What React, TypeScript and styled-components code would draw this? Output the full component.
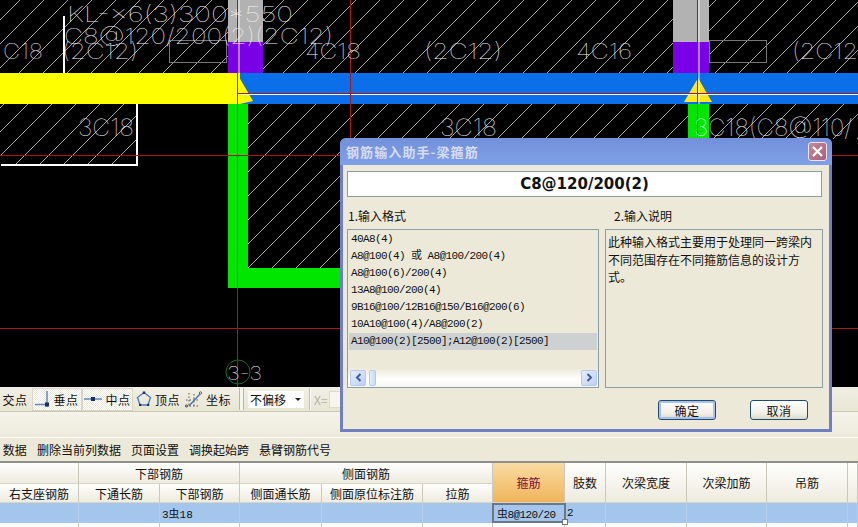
import React from 'react';
import styled, { createGlobalStyle } from 'styled-components';

const CJK = '"Noto Sans CJK SC", "Liberation Sans", sans-serif';

const GlobalStyle = createGlobalStyle`
  html, body {
    margin: 0;
    padding: 0;
    background: #ece9d8;
    overflow: hidden;
  }
  * { box-sizing: border-box; }
`;

const Page = styled.div`
  position: relative;
  width: 858px;
  height: 527px;
  overflow: hidden;
  display: flex;
  flex-direction: column;
  font-family: ${CJK};
  font-size: 12px;
  color: #111;
  background: #ece9d8;
`;

const CadCanvas = styled.svg`
  display: block;
  flex: none;
  width: 858px;
  height: 387px;
  background: #000;
`;

const CadLabel = styled.text`
  font-family: Inter, "Liberation Sans", sans-serif;
  font-weight: 100;
  fill: #f2f2f2;
`;

const StatusBar = styled.div`
  flex: none;
  height: 25px;
  display: flex;
  align-items: center;
  padding-left: 3px;
  background: linear-gradient(#f1efe4, #e9e6d5);
  border-bottom: 1px solid #c9c6b4;
  white-space: nowrap;
`;

const SnapItem = styled.div<{ $width: number; $on?: boolean }>`
  width: ${(p) => p.$width}px;
  height: 23px;
  display: flex;
  align-items: center;
  justify-content: center;
  gap: 3px;
  letter-spacing: 0.5px;
  ${(p) =>
    p.$on &&
    `
    border: 1px solid #d9d6c6;
    background: repeating-conic-gradient(#fff 0 25%, #eceadd 0 50%) 0 0 / 2px 2px;
  `}
`;

const Grip = styled.div`
  width: 5px;
  height: 22px;
  margin: 0 4px 0 6px;
  border-left: 1px solid #b8b5a3;
  border-right: 1px solid #b8b5a3;
  background: #f7f6ee;
`;

const ThinDivider = styled.div`
  width: 2px;
  height: 22px;
  margin: 0 1px 0 5px;
  border-left: 1px solid #c2bfae;
  border-right: 1px solid #fbfaf4;
`;

const OffsetSelect = styled.div`
  width: 56px;
  height: 17px;
  padding: 0 3px 0 2px;
  display: flex;
  align-items: center;
  justify-content: space-between;
  background: #fff;
  line-height: 17px;
`;

const SelectArrow = styled.div`
  width: 0;
  height: 0;
  border-left: 3px solid transparent;
  border-right: 3px solid transparent;
  border-top: 3px solid #222;
`;

const CoordLabel = styled.span`
  margin-left: 2px;
  color: #b5b2a4;
  width: 15px;
`;

const CoordInput = styled.div`
  width: 20px;
  height: 17px;
  background: #f6f5ee;
  border: 1px solid #dedbc9;
`;

const BlankBand = styled.div`
  flex: none;
  height: 26px;
  background: linear-gradient(#f5f3ea, #eeebdd);
  border-bottom: 1px solid #fbfaf4;
`;

const ActionBar = styled.div`
  flex: none;
  height: 25px;
  display: flex;
  align-items: center;
  background: #ece9d8;
  border-bottom: 2px solid #8f8f8b;
  white-space: nowrap;
`;

const Action = styled.span<{ $width: number }>`
  width: ${(p) => p.$width}px;
  flex: none;
`;

const columns = '79px 81px 80px 82px 101px 70px 72px 41px 81px 80px 81px 10px';

const SheetHead = styled.div`
  flex: none;
  display: grid;
  grid-template-columns: ${columns};
  grid-template-rows: 21px 19px;
  height: 40px;
`;

const HeadCell = styled.div<{ $col: string; $row: string; $active?: boolean }>`
  grid-column: ${(p) => p.$col};
  grid-row: ${(p) => p.$row};
  display: flex;
  align-items: center;
  justify-content: center;
  border-right: 1px solid #cbc8ba;
  border-bottom: 1px solid #d8d5c6;
  color: ${(p) => (p.$active ? '#7a0c3c' : '#111')};
  background: ${(p) =>
    p.$active
      ? 'linear-gradient(#f9dba2, #f0b55a)'
      : 'linear-gradient(#fefefc, #eeebdf)'};
`;

const SheetRow = styled.div<{ $selected?: boolean }>`
  flex: none;
  display: grid;
  grid-template-columns: ${columns};
  height: 20px;
  background: ${(p) => (p.$selected ? '#a4c6ec' : '#fff')};
`;

const DataCell = styled.div<{ $selected?: boolean }>`
  display: flex;
  align-items: center;
  padding-left: 2px;
  white-space: nowrap;
  font-family: "Liberation Mono", ${CJK};
  font-size: 11px;
  border-right: 1px solid ${(p) => (p.$selected ? '#b4cdea' : '#c9c7bb')};
`;

const FocusCell = styled.div`
  position: relative;
  display: flex;
  align-items: center;
  padding-left: 3px;
  margin: 0 -1px;
  border: 2px solid #6c7784;
  white-space: nowrap;
  font-family: "Liberation Mono", ${CJK};
  font-size: 11px;
  letter-spacing: -0.6px;
`;

const FocusHandle = styled.div`
  position: absolute;
  right: -4px;
  bottom: -4px;
  width: 6px;
  height: 6px;
  background: #fff;
  border: 1px solid #6c7784;
`;

const Dialog = styled.div`
  position: absolute;
  left: 340px;
  top: 138px;
  width: 492px;
  height: 294px;
  display: flex;
  flex-direction: column;
  border-radius: 6px 6px 0 0;
  background: #6f7fc0;
  padding: 0 3px 3px;
`;

const TitleBar = styled.div`
  flex: none;
  height: 27px;
  margin: 0 -3px;
  padding: 0 5px 0 6px;
  display: flex;
  align-items: center;
  justify-content: space-between;
  border-radius: 6px 6px 0 0;
  background: linear-gradient(#7390da, #7a9ae2 60%, #7f9fe6);
`;

const TitleText = styled.span`
  color: #d6dcf0;
  font-size: 13px;
  font-weight: 700;
  letter-spacing: 1.1px;
`;

const CloseButton = styled.div`
  width: 19px;
  height: 19px;
  display: flex;
  align-items: center;
  justify-content: center;
  border: 1px solid #e8e4ea;
  border-radius: 3px;
  background: linear-gradient(135deg, #c48a9c, #a85f78);
`;

const DialogBody = styled.div`
  flex: 1;
  padding: 6px 7px 0 4px;
  background: #ece9d8;
  display: flex;
  flex-direction: column;
`;

const FormulaBox = styled.div`
  height: 26px;
  flex: none;
  display: flex;
  align-items: center;
  justify-content: center;
  background: #fff;
  border: 1px solid #8a9ea6;
  font-family: "DejaVu Sans", sans-serif;
  font-size: 15px;
  font-weight: 700;
  color: #111;
`;

const Panels = styled.div`
  display: grid;
  grid-template-columns: 252px 218px;
  column-gap: 6px;
  grid-template-rows: 32px 159px;
`;

const PanelLabel = styled.div<{ $inset: number }>`
  padding: 11px 0 0 ${(p) => p.$inset}px;
  line-height: 16px;
  font-size: 12px;
`;

const ListPanel = styled.div`
  display: flex;
  flex-direction: column;
  justify-content: space-between;
  border: 1px solid #8a9ea6;
  padding: 1px 1px 0;
`;

const FormatRows = styled.div`
  display: flex;
  flex-direction: column;
`;

const FormatRow = styled.div<{ $selected?: boolean }>`
  height: 17px;
  line-height: 17px;
  padding-left: 2px;
  font-family: "Liberation Mono", ${CJK};
  font-size: 11px;
  letter-spacing: -0.6px;
  white-space: nowrap;
  color: #111;
  background: ${(p) => (p.$selected ? '#cdd1d2' : 'transparent')};
`;

const ScrollTrack = styled.div`
  height: 19px;
  margin: 0 -1px;
  display: flex;
  align-items: center;
  justify-content: space-between;
  padding: 0 1px 0 2px;
  background: linear-gradient(#ece9d8, #fff 60%, #f6f5ee);
`;

const ScrollArrow = styled.div`
  width: 16px;
  height: 16px;
  display: flex;
  align-items: center;
  justify-content: center;
  border: 1px solid #b6c8ec;
  border-radius: 2px;
  background: linear-gradient(135deg, #e6eefc, #bccff4);
`;

const ScrollThumb = styled.div`
  width: 7px;
  height: 16px;
  margin: 0 auto 0 3px;
  border: 1px solid #b6c8ec;
  border-radius: 2px;
  background: linear-gradient(90deg, #e6eefc, #c8d8f6);
`;

const NotePanel = styled.div`
  border: 1px solid #8a9ea6;
  padding: 3px 2px;
  line-height: 17.5px;
  font-size: 12px;
  color: #111;
`;

const DialogFooter = styled.div`
  display: flex;
  justify-content: flex-end;
  gap: 34px;
  padding: 12px 14px 0 0;
`;

const DialogButton = styled.div<{ $primary?: boolean }>`
  width: 58px;
  height: 20px;
  display: flex;
  align-items: center;
  justify-content: center;
  border: 1px solid #1f4a73;
  border-radius: 3px;
  background: linear-gradient(#fff, #f1efe4 70%, #dcd8c6);
  box-shadow: ${(p) =>
    p.$primary ? 'inset 0 0 0 2px #a9c2ea' : 'none'};
  letter-spacing: 0.5px;
`;

const hatchAreas = [
  [0, 0, 858, 73, 'hatchTop'],
  [0, 104, 137, 61, 'hatchLow'],
  [248, 104, 440, 164, 'hatchLow'],
  [709, 104, 149, 35, 'hatchLow'],
] as const;

const solids = [
  [228, 0, 35, 42, '#b2b2b2'],
  [228, 42, 35, 31, '#7a00e6'],
  [673, 0, 36, 42, '#b2b2b2'],
  [673, 42, 36, 31, '#7a00e6'],
  [228, 104, 20, 184, '#00e600'],
  [228, 268, 130, 20, '#00e600'],
  [688, 104, 21, 40, '#00e600'],
  [240, 73, 618, 31, '#0a6fe8'],
  [0, 73, 240, 31, '#ffff00'],
] as const;

const redLines = [
  [0, 155.5, 858, 155.5],
  [0, 328.5, 858, 328.5],
  [237.5, 0, 237.5, 387],
  [697.5, 0, 697.5, 140],
  [350.5, 0, 350.5, 140],
  [238, 93.5, 858, 93.5],
];

const whiteLines = [
  [239, 0, 239, 73],
  [699, 0, 699, 104],
  [240, 94.5, 858, 94.5],
];

const cadTexts = [
  { x: 67, y: 22, w: 226, size: 22, t: 'KL-×6(3)300*550' },
  { x: 64, y: 44, w: 269, size: 22, t: 'C8@120/200(2)(2C12)' },
  { x: 3, y: 59, w: 40, size: 22, t: 'C18' },
  { x: 62, y: 59, w: 76, size: 22, t: '(2C12)' },
  { x: 305, y: 59, w: 56, size: 22, t: '4C18' },
  { x: 424, y: 59, w: 78, size: 22, t: '(2C12)' },
  { x: 576, y: 59, w: 56, size: 22, t: '4C16' },
  { x: 792, y: 59, w: 66, size: 22, t: '(2C12' },
  { x: 78, y: 136, w: 56, size: 24, t: '3C18' },
  { x: 440, y: 136, w: 57, size: 24, t: '3C18' },
  { x: 694, y: 136, w: 158, size: 24, t: '3C18(C8@110/' },
  { x: 227, y: 380, w: 35, size: 19, t: '3-3' },
];

const CadDrawing = () => (
  <CadCanvas viewBox="0 0 858 387">
    <defs>
      <pattern id="hatchTop" width="24" height="24" patternUnits="userSpaceOnUse" patternTransform="translate(20 0)">
        <path d="M-1 25 L25 -1" stroke="#b4b4b4" strokeWidth="0.9" fill="none" />
      </pattern>
      <pattern id="hatchLow" width="24" height="24" patternUnits="userSpaceOnUse" patternTransform="translate(12 0)">
        <path d="M-1 25 L25 -1" stroke="#b4b4b4" strokeWidth="0.9" fill="none" />
      </pattern>
    </defs>
    {hatchAreas.map(([x, y, w, h, id], i) => (
      <rect key={i} x={x} y={y} width={w} height={h} fill={`url(#${id})`} />
    ))}
    {solids.map(([x, y, w, h, c], i) => (
      <rect key={i} x={x} y={y} width={w} height={h} fill={c} />
    ))}
    <path d="M239 77 L253 101 L240 104 L239 104 Z" fill="#ffff00" />
    <path d="M698 78 L712 102 L684 102 Z" fill="#ffe81a" />
    <path d="M1 165 H137 V104" stroke="#fff" strokeWidth="2" fill="none" />
    <path d="M64 16 V73" stroke="#fff" strokeWidth="2" fill="none" />
    <rect x="169.5" y="40.5" width="57" height="22" stroke="#777" fill="none" />
    <rect x="709.5" y="40.5" width="57" height="22" stroke="#777" fill="none" />
    {whiteLines.map(([x1, y1, x2, y2], i) => (
      <line key={i} x1={x1} y1={y1} x2={x2} y2={y2} stroke="#f4f4f4" strokeWidth="1" />
    ))}
    {redLines.map(([x1, y1, x2, y2], i) => (
      <line key={i} x1={x1} y1={y1} x2={x2} y2={y2} stroke="#a81818" strokeWidth="1" />
    ))}
    <circle cx="238" cy="372" r="12" stroke="#12702a" fill="none" />
    {cadTexts.map((c, i) => (
      <CadLabel
        key={i}
        x={c.x}
        y={c.y}
        fontSize={c.size}
        textLength={c.w}
        lengthAdjust="spacingAndGlyphs"
      >
        {c.t}
      </CadLabel>
    ))}
  </CadCanvas>
);

const PerpIcon = () => (
  <svg width="15" height="18" viewBox="0 0 15 18">
    <path d="M0 14.5 H14" stroke="#5f86c6" strokeWidth="1.5" />
    <path d="M12 1 V17" stroke="#5f86c6" strokeWidth="1.5" />
    <rect x="10" y="12.5" width="4" height="4" fill="#17305f" />
  </svg>
);

const MidIcon = () => (
  <svg width="18" height="10" viewBox="0 0 18 10">
    <path d="M0 5 H18" stroke="#5f86c6" strokeWidth="1.5" />
    <rect x="7" y="3" width="4" height="4" fill="#17305f" />
  </svg>
);

const VertexIcon = () => (
  <svg width="16" height="16" viewBox="0 0 16 16">
    <path d="M8 1.5 L14.5 6.5 L12 14 H4 L1.5 6.5 Z" stroke="#4d78bd" strokeWidth="1.3" fill="none" />
    <rect x="6.8" y="0.5" width="2.4" height="2.4" fill="#17305f" />
    <rect x="3" y="12.8" width="2.2" height="2.2" fill="#17305f" />
    <rect x="11" y="12.8" width="2.2" height="2.2" fill="#17305f" />
  </svg>
);

const CoordIcon = () => (
  <svg width="18" height="17" viewBox="0 0 18 17">
    <path d="M4 2 V15 M1 15 H14 M1 9 H15 M9 3 V15" stroke="#555" strokeWidth="1" strokeDasharray="1.5 2" fill="none" />
    <path d="M4 15 L15 3" stroke="#4d78bd" strokeWidth="1.5" />
    <circle cx="1.5" cy="15" r="1.2" fill="none" stroke="#333" strokeWidth="0.7" />
    <circle cx="15.5" cy="2" r="1.2" fill="none" stroke="#333" strokeWidth="0.7" />
  </svg>
);

const CloseIcon = () => (
  <svg width="11" height="11" viewBox="0 0 11 11">
    <path d="M1 1 L10 10 M10 1 L1 10" stroke="#fff" strokeWidth="2.2" />
  </svg>
);

const ArrowIcon = ({ flip }: { flip?: boolean }) => (
  <svg width="7" height="9" viewBox="0 0 7 9">
    <path
      d={flip ? 'M1.5 1 L5 4.5 L1.5 8' : 'M5.5 1 L2 4.5 L5.5 8'}
      stroke="#3f5f96"
      strokeWidth="2"
      fill="none"
    />
  </svg>
);

const formats = [
  '40A8(4)',
  'A8@100(4) 或 A8@100/200(4)',
  'A8@100(6)/200(4)',
  '13A8@100/200(4)',
  '9B16@100/12B16@150/B16@200(6)',
  '10A10@100(4)/A8@200(2)',
  'A10@100(2)[2500];A12@100(2)[2500]',
];

const headCells = [
  { col: '1', row: '1', t: '' },
  { col: '2 / 4', row: '1', t: '下部钢筋' },
  { col: '4 / 7', row: '1', t: '侧面钢筋' },
  { col: '1', row: '2', t: '右支座钢筋' },
  { col: '2', row: '2', t: '下通长筋' },
  { col: '3', row: '2', t: '下部钢筋' },
  { col: '4', row: '2', t: '侧面通长筋' },
  { col: '5', row: '2', t: '侧面原位标注筋' },
  { col: '6', row: '2', t: '拉筋' },
  { col: '7', row: '1 / 3', t: '箍筋', active: true },
  { col: '8', row: '1 / 3', t: '肢数' },
  { col: '9', row: '1 / 3', t: '次梁宽度' },
  { col: '10', row: '1 / 3', t: '次梁加筋' },
  { col: '11', row: '1 / 3', t: '吊筋' },
  { col: '12', row: '1 / 3', t: '' },
];

const blankCols = Array.from({ length: 12 }, (_, i) => i);

const App = () => {
  return (
    <Page>
      <GlobalStyle />
      <CadDrawing />

      <StatusBar>
        <SnapItem $width={24}>交点</SnapItem>
        <SnapItem $width={5} />
        <SnapItem $width={50} $on>
          <PerpIcon />
          垂点
        </SnapItem>
        <SnapItem $width={51} $on>
          <MidIcon />
          中点
        </SnapItem>
        <SnapItem $width={50}>
          <VertexIcon />
          顶点
        </SnapItem>
        <SnapItem $width={50}>
          <CoordIcon />
          坐标
        </SnapItem>
        <Grip />
        <OffsetSelect>
          不偏移
          <SelectArrow />
        </OffsetSelect>
        <ThinDivider />
        <CoordLabel>X=</CoordLabel>
        <CoordInput />
      </StatusBar>

      <BlankBand />

      <ActionBar>
        <Action $width={37}>&nbsp;数据</Action>
        <Action $width={94}>删除当前列数据</Action>
        <Action $width={58}>页面设置</Action>
        <Action $width={70}>调换起始跨</Action>
        <Action $width={90}>悬臂钢筋代号</Action>
      </ActionBar>

      <SheetHead>
        {headCells.map((h, i) => (
          <HeadCell key={i} $col={h.col} $row={h.row} $active={h.active}>
            {h.t}
          </HeadCell>
        ))}
      </SheetHead>

      <SheetRow $selected>
        {blankCols.map((i) => {
          if (i === 6) {
            return (
              <FocusCell key={i}>
                虫8@120/20
                <FocusHandle />
              </FocusCell>
            );
          }
          return (
            <DataCell key={i} $selected>
              {i === 2 ? '3虫18' : i === 7 ? '2' : ''}
            </DataCell>
          );
        })}
      </SheetRow>
      <SheetRow>
        {blankCols.map((i) => (
          <DataCell key={i} />
        ))}
      </SheetRow>

      <Dialog>
        <TitleBar>
          <TitleText>钢筋输入助手-梁箍筋</TitleText>
          <CloseButton>
            <CloseIcon />
          </CloseButton>
        </TitleBar>
        <DialogBody>
          <FormulaBox>C8@120/200(2)</FormulaBox>
          <Panels>
            <PanelLabel $inset={1}>1.输入格式</PanelLabel>
            <PanelLabel $inset={9}>2.输入说明</PanelLabel>
            <ListPanel>
              <FormatRows>
                {formats.map((f, i) => (
                  <FormatRow key={i} $selected={i === formats.length - 1}>
                    {f}
                  </FormatRow>
                ))}
              </FormatRows>
              <ScrollTrack>
                <ScrollArrow>
                  <ArrowIcon />
                </ScrollArrow>
                <ScrollThumb />
                <ScrollArrow>
                  <ArrowIcon flip />
                </ScrollArrow>
              </ScrollTrack>
            </ListPanel>
            <NotePanel>
              此种输入格式主要用于处理同一跨梁内不同范围存在不同箍筋信息的设计方式。
            </NotePanel>
          </Panels>
          <DialogFooter>
            <DialogButton $primary>确定</DialogButton>
            <DialogButton>取消</DialogButton>
          </DialogFooter>
        </DialogBody>
      </Dialog>
    </Page>
  );
};

export default App;
